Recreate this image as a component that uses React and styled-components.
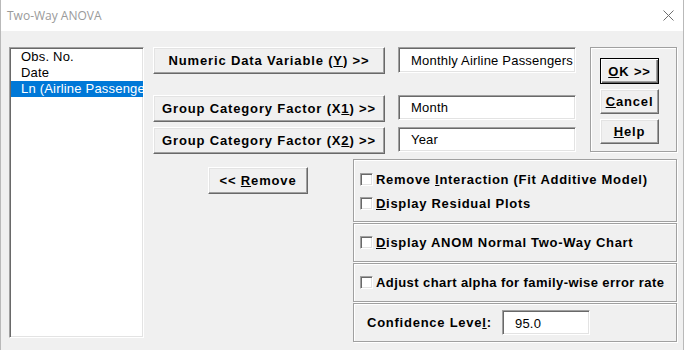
import React from "react";
import styled, { createGlobalStyle } from "styled-components";

const GlobalStyle = createGlobalStyle`
  html, body {
    margin: 0;
    padding: 0;
    background: #ffffff;
  }
  body {
    font-family: "Liberation Sans", Arial, sans-serif;
    font-size: 13px;
    letter-spacing: 0.2px;
    color: #000;
  }
`;

const Window = styled.div`
  width: 684px;
  height: 350px;
  box-sizing: border-box;
  border-left: 1px solid #b9b9b9;
  border-right: 1px solid #b9b9b9;
  background: #f0f0f0;
  display: flex;
  flex-direction: column;
  overflow: hidden;
`;

const TitleBar = styled.div`
  height: 31px;
  flex-shrink: 0;
  background: #ffffff;
  display: flex;
  align-items: center;
  justify-content: space-between;
  padding: 0 9px 0 6px;
`;

const Title = styled.span`
  font-family: "Open Sans", "Noto Sans", sans-serif;
  font-size: 12px;
  letter-spacing: 0;
  color: #9a9a9a;
`;

const Body = styled.div`
  display: flex;
  padding: 16px 0 0 8px;
`;

const ListBox = styled.div`
  width: 135px;
  height: 291px;
  box-sizing: border-box;
  background: #ffffff;
  border: 1px solid;
  border-color: #a0a0a0 #ffffff #ffffff #a0a0a0;
  box-shadow: inset 1px 1px 0 #696969, inset -1px -1px 0 #e3e3e3;
  padding: 1px 0 1px 1px;
  overflow: hidden;
`;

const ListItem = styled.div`
  height: 16px;
  line-height: 16px;
  padding-left: 10px;
  white-space: nowrap;
  overflow: hidden;
  background: ${(p) => (p.selected ? "#0078d7" : "transparent")};
  color: ${(p) => (p.selected ? "#ffffff" : "#000000")};
`;

const Main = styled.div`
  margin-left: 9px;
  display: flex;
  flex-direction: column;
`;

const TopArea = styled.div`
  display: flex;
  align-items: flex-start;
`;

const FieldRows = styled.div`
  display: flex;
  flex-direction: column;
`;

const FieldRow = styled.div`
  display: flex;
  align-items: flex-start;
  margin-top: ${(p) => p.gap || 0}px;
`;

const Button = styled.button`
  width: ${(p) => p.w}px;
  height: ${(p) => p.h || 27}px;
  box-sizing: border-box;
  padding: 0;
  margin: 0;
  background: #f0f0f0;
  border: 1px solid;
  border-color: #ffffff #696969 #696969 #ffffff;
  box-shadow: inset -1px -1px 0 #a0a0a0, inset 1px 1px 0 #e3e3e3;
  font-family: "Liberation Sans", Arial, sans-serif;
  font-size: 13px;
  font-weight: bold;
  letter-spacing: 0.85px;
  color: #000;
  white-space: nowrap;
  ${(p) =>
    p.primary &&
    `
    border-color: #000;
    box-shadow: inset 1px 1px 0 #fff, inset -1px -1px 0 #696969, inset -2px -2px 0 #a0a0a0;
  `}
`;

const TextField = styled.div`
  width: ${(p) => p.w}px;
  height: ${(p) => p.h}px;
  margin-left: ${(p) => p.ml || 0}px;
  box-sizing: border-box;
  background: #ffffff;
  border: 1px solid;
  border-color: #a0a0a0 #ffffff #ffffff #a0a0a0;
  box-shadow: inset 1px 1px 0 #696969, inset -1px -1px 0 #e3e3e3;
  padding: ${(p) => p.pt || 0}px 0 0 ${(p) => p.pl || 12}px;
  display: flex;
  align-items: ${(p) => (p.pt ? "flex-start" : "center")};
  font-weight: normal;
  letter-spacing: 0.2px;
  white-space: nowrap;
  overflow: hidden;
`;

const CommandGroup = styled.div`
  margin-left: 14px;
  width: 87px;
  height: 105px;
  box-sizing: border-box;
  border: 1px solid #a0a0a0;
  box-shadow: inset 1px 1px 0 #fff, 1px 1px 0 #fff;
  padding: 10px 0 0 9px;
  display: flex;
  flex-direction: column;
  gap: 5px;
`;

const BottomArea = styled.div`
  display: flex;
  margin-top: 5px;
`;

const RemoveColumn = styled.div`
  width: 200px;
  padding: 8px 0 0 55px;
  box-sizing: border-box;
`;

const Options = styled.div`
  width: 324px;
  display: flex;
  flex-direction: column;
  gap: 1px;
`;

const OptionGroup = styled.div`
  height: ${(p) => p.h}px;
  box-sizing: border-box;
  border: 1px solid #a0a0a0;
  box-shadow: inset 1px 1px 0 #fff, 1px 1px 0 #fff;
  padding: ${(p) => (p.stack ? "9px 0 0 6px" : "0 0 0 6px")};
  display: flex;
  flex-direction: column;
  justify-content: ${(p) => (p.stack ? "flex-start" : "center")};
  gap: 4px;
  overflow: hidden;
`;

const CheckRow = styled.label`
  height: 20px;
  display: flex;
  align-items: center;
  gap: 3px;
  font-weight: bold;
  letter-spacing: ${(p) => p.spacing ?? 0.7}px;
  white-space: nowrap;
`;

const CheckBox = styled.span`
  width: 13px;
  height: 13px;
  box-sizing: border-box;
  background: #ffffff;
  border: 1px solid;
  border-color: #a0a0a0 #ffffff #ffffff #a0a0a0;
  box-shadow: inset 1px 1px 0 #696969, inset -1px -1px 0 #e3e3e3;
  flex-shrink: 0;
`;

const LevelRow = styled.div`
  display: flex;
  align-items: center;
  padding-left: 7px;
`;

const LevelLabel = styled.span`
  width: 135px;
  font-weight: bold;
  letter-spacing: 0.75px;
  white-space: nowrap;
`;

const Key = styled.u`
  text-decoration: underline;
  text-underline-offset: 1px;
`;

function CloseIcon() {
  return (
    <svg width="11" height="11" viewBox="0 0 11 11">
      <path d="M0.5 0.5 L10.5 10.5 M10.5 0.5 L0.5 10.5" stroke="#6e6e6e" strokeWidth="1" fill="none" />
    </svg>
  );
}

function Check({ children, spacing }) {
  return (
    <CheckRow spacing={spacing}>
      <CheckBox />
      <span>{children}</span>
    </CheckRow>
  );
}

export default function App() {
  const variables = ["Obs. No.", "Date", "Ln (Airline Passengers)"];
  return (
    <>
      <GlobalStyle />
      <Window>
        <TitleBar>
          <Title>Two-Way ANOVA</Title>
          <CloseIcon />
        </TitleBar>
        <Body>
          <ListBox>
            {variables.map((v, i) => (
              <ListItem key={v} selected={i === 2}>
                {v}
              </ListItem>
            ))}
          </ListBox>

          <Main>
            <TopArea>
              <FieldRows>
                <FieldRow>
                  <Button w={232}>
                    Numeric Data Variable (<Key>Y</Key>) &gt;&gt;
                  </Button>
                  <TextField w={178} h={26} ml={13}>
                    Monthly Airline Passengers
                  </TextField>
                </FieldRow>
                <FieldRow gap={21}>
                  <Button w={232}>
                    Group Category Factor (X<Key>1</Key>) &gt;&gt;
                  </Button>
                  <TextField w={178} h={25} ml={13}>
                    Month
                  </TextField>
                </FieldRow>
                <FieldRow gap={5}>
                  <Button w={232}>
                    Group Category Factor (X<Key>2</Key>) &gt;&gt;
                  </Button>
                  <TextField w={178} h={25} ml={13}>
                    Year
                  </TextField>
                </FieldRow>
              </FieldRows>

              <CommandGroup>
                <Button w={59} h={26} primary>
                  <Key>O</Key>K &gt;&gt;
                </Button>
                <Button w={59} h={25}>
                  <Key>C</Key>ancel
                </Button>
                <Button w={59} h={25}>
                  <Key>H</Key>elp
                </Button>
              </CommandGroup>
            </TopArea>

            <BottomArea>
              <RemoveColumn>
                <Button w={100}>
                  &lt;&lt; <Key>R</Key>emove
                </Button>
              </RemoveColumn>

              <Options>
                <OptionGroup h={63} stack>
                  <Check>
                    Remove <Key>I</Key>nteraction (Fit Additive Model)
                  </Check>
                  <Check>
                    <Key>D</Key>isplay Residual Plots
                  </Check>
                </OptionGroup>
                <OptionGroup h={39}>
                  <Check>
                    <Key>D</Key>isplay ANOM Normal Two-Way Chart
                  </Check>
                </OptionGroup>
                <OptionGroup h={39}>
                  <Check spacing={0.42}>Adjust chart alpha for family-wise error rate</Check>
                </OptionGroup>
                <OptionGroup h={39}>
                  <LevelRow>
                    <LevelLabel>
                      Confidence Leve<Key>l</Key>:
                    </LevelLabel>
                    <TextField w={88} h={25} pt={5} pl={12}>
                      95.0
                    </TextField>
                  </LevelRow>
                </OptionGroup>
              </Options>
            </BottomArea>
          </Main>
        </Body>
      </Window>
    </>
  );
}
